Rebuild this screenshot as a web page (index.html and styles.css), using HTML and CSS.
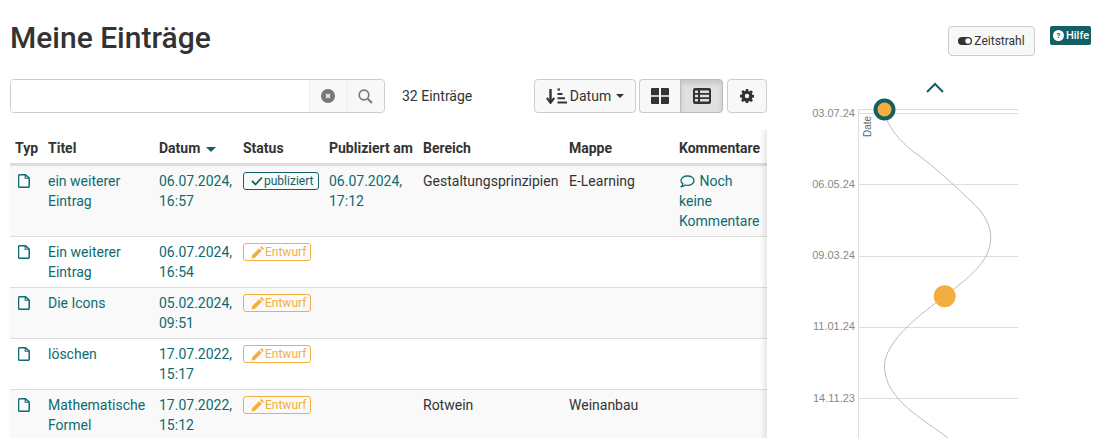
FILE: index.html
```html
<!DOCTYPE html>
<html lang="de">
<head>
    <meta charset="UTF-8">
    <meta name="viewport" content="width=device-width, initial-scale=1.0">
    <title>Meine Einträge</title>
    <link rel="stylesheet" href="styles.css">
</head>
<body>

<svg class="icon-defs" width="0" height="0">
    <symbol id="i-file" viewBox="0 0 12 14">
        <path d="M1.600 .8h5.900l3.700 3.400v7.900a1.100 1.100 0 0 1-1.100 1.100H1.600a1.100 1.100 0 0 1-1.100-1.100V1.900a1.100 1.100 0 0 1 1.100-1.100z" fill="none" stroke="currentColor" stroke-width="1.500"/>
        <path d="M7.200 1v3.300h3.600" fill="none" stroke="currentColor" stroke-width="1.100"/>
    </symbol>
    <symbol id="i-pencil" viewBox="0 0 14 14">
        <path d="M.6 13.4l.8-3.700 7.400-7.400 2.900 2.900-7.400 7.400zM9.700 1.400l.8-.8a1 1 0 0 1 1.400 0l1.500 1.500a1 1 0 0 1 0 1.400l-.8.8z" fill="currentColor"/>
    </symbol>
</svg>

<div class="page">
    <main class="main">
        <h1 class="title">Meine Einträge</h1>

        <div class="toolbar">
            <div class="search">
                <input class="search-input" type="text" aria-label="Suche">
                <button class="search-btn" type="button" aria-label="Leeren">
                    <svg width="14" height="14" viewBox="0 0 14 14"><circle cx="7" cy="7" r="7" fill="#777"/><path d="M5 5l4 4M9 5l-4 4" stroke="#fff" stroke-width="1.400"/></svg>
                </button>
                <button class="search-btn" type="button" aria-label="Suchen">
                    <svg width="15" height="15" viewBox="0 0 15 15"><circle cx="6" cy="6" r="4.800" fill="none" stroke="#777" stroke-width="1.700"/><path d="M9.600 9.600l4.400 4.400" stroke="#777" stroke-width="2"/></svg>
                </button>
            </div>
            <span class="count">32 Einträge</span>
            <button class="btn btn-sort" type="button">
                <svg width="21" height="16" viewBox="0 0 21 16"><path d="M4.500 1v13" fill="none" stroke="#333" stroke-width="2.400"/><path d="M.8 9.800l3.700 5 3.700-5" fill="none" stroke="#333" stroke-width="2.200"/><path d="M11.500 1.500h2.500M11.500 6h5M11.500 10.300h7.500M11.500 14.500h9.500" stroke="#333" stroke-width="2"/></svg>
                Datum
                <span class="caret"></span>
            </button>
            <div class="btn-group">
                <button class="btn btn-view" type="button" aria-label="Kacheln">
                    <svg width="18" height="16" viewBox="0 0 18 16"><path d="M1 0h7v7.300H0V1a1 1 0 0 1 1-1zM10 0h7a1 1 0 0 1 1 1v6.300h-8zM0 8.700h8V16H1a1 1 0 0 1-1-1zM10 8.700h8V15a1 1 0 0 1-1 1h-7z" fill="#333"/></svg>
                </button>
                <button class="btn btn-view active" type="button" aria-label="Tabelle">
                    <svg width="18" height="16" viewBox="0 0 18 16"><path fill-rule="evenodd" fill="#333" d="M2 0h14a2 2 0 0 1 2 2v12a2 2 0 0 1-2 2H2a2 2 0 0 1-2-2V2a2 2 0 0 1 2-2zM2 2.500v2.500h3V2.500zM7 2.500v2.500h9V2.500zM2 6.800v2.400h3V6.800zM7 6.800v2.400h9V6.800zM2 11v2.500h3V11zM7 11v2.500h9V11z"/></svg>
                </button>
            </div>
            <button class="btn btn-gear" type="button" aria-label="Einstellungen">
                <svg width="14" height="14" viewBox="0 0 14 14"><path fill-rule="evenodd" fill="#333" d="M5.800 0h2.400l.3 1.900 1.100.5 1.600-1.100 1.700 1.700-1.100 1.600.5 1.100 1.900.3v2.400l-1.900.3-.5 1.100 1.100 1.600-1.700 1.700-1.600-1.100-1.100.5-.3 1.900H5.800l-.3-1.900-1.100-.5-1.600 1.100-1.700-1.700 1.100-1.600-.5-1.100L0 8.200V5.800l1.900-.3.500-1.100-1.100-1.600 1.700-1.700 1.600 1.100 1.100-.5zM7 4.800a2.200 2.200 0 1 0 0 4.400 2.200 2.200 0 0 0 0-4.400z"/></svg>
            </button>
        </div>

        <div class="table-wrap">
            <table class="entries">
                <colgroup>
                    <col class="c-typ"><col class="c-titel"><col class="c-datum"><col class="c-status">
                    <col class="c-pub"><col class="c-bereich"><col class="c-mappe"><col class="c-komm">
                </colgroup>
                <thead>
                    <tr>
                        <th>Typ</th>
                        <th>Titel</th>
                        <th>Datum <span class="sort-caret"></span></th>
                        <th>Status</th>
                        <th>Publiziert am</th>
                        <th>Bereich</th>
                        <th>Mappe</th>
                        <th>Kommentare</th>
                    </tr>
                </thead>
                <tbody>
                    <tr>
                        <td><svg class="file"><use href="#i-file"/></svg></td>
                        <td><a href="#">ein weiterer Eintrag</a></td>
                        <td class="link">06.07.2024, 16:57</td>
                        <td><span class="badge badge-pub"><svg width="12" height="10" viewBox="0 0 12 10"><path d="M1 5l3.500 3.500L11 1.500" fill="none" stroke="currentColor" stroke-width="1.800"/></svg>publiziert</span></td>
                        <td class="link">06.07.2024, 17:12</td>
                        <td>Gestaltungsprinzipien</td>
                        <td>E-Learning</td>
                        <td><a href="#"><svg class="bubble" width="15" height="13" viewBox="0 0 15 13"><path d="M7.500 1C3.900 1 1 3 1 5.600c0 1.300.7 2.400 1.800 3.200-.2 1.100-.9 2.200-1.400 2.700 1.500-.1 2.900-.8 3.800-1.500.7.200 1.400.3 2.300.3 3.600 0 6.500-2.100 6.500-4.700S11.100 1 7.500 1z" fill="none" stroke="currentColor" stroke-width="1.300"/></svg> Noch keine Kommentare</a></td>
                    </tr>
                    <tr>
                        <td><svg class="file"><use href="#i-file"/></svg></td>
                        <td><a href="#">Ein weiterer Eintrag</a></td>
                        <td class="link">06.07.2024, 16:54</td>
                        <td><span class="badge badge-draft"><svg width="13" height="13"><use href="#i-pencil"/></svg>Entwurf</span></td>
                        <td></td><td></td><td></td><td></td>
                    </tr>
                    <tr>
                        <td><svg class="file"><use href="#i-file"/></svg></td>
                        <td><a href="#">Die Icons</a></td>
                        <td class="link">05.02.2024, 09:51</td>
                        <td><span class="badge badge-draft"><svg width="13" height="13"><use href="#i-pencil"/></svg>Entwurf</span></td>
                        <td></td><td></td><td></td><td></td>
                    </tr>
                    <tr>
                        <td><svg class="file"><use href="#i-file"/></svg></td>
                        <td><a href="#">löschen</a></td>
                        <td class="link">17.07.2022, 15:17</td>
                        <td><span class="badge badge-draft"><svg width="13" height="13"><use href="#i-pencil"/></svg>Entwurf</span></td>
                        <td></td><td></td><td></td><td></td>
                    </tr>
                    <tr>
                        <td><svg class="file"><use href="#i-file"/></svg></td>
                        <td><a href="#">Mathematische Formel</a></td>
                        <td class="link">17.07.2022, 15:12</td>
                        <td><span class="badge badge-draft"><svg width="13" height="13"><use href="#i-pencil"/></svg>Entwurf</span></td>
                        <td></td>
                        <td>Rotwein</td>
                        <td>Weinanbau</td>
                        <td></td>
                    </tr>
                </tbody>
            </table>
        </div>
    </main>

    <aside class="side">
        <div class="side-top">
            <button class="btn btn-timeline" type="button">
                <svg width="14" height="8" viewBox="0 0 14 8"><rect width="14" height="8" rx="4" fill="#333"/><circle cx="10" cy="4" r="2.700" fill="#fff"/></svg>
                Zeitstrahl
            </button>
            <a class="help" href="#"><span class="help-dot">?</span>Hilfe</a>
        </div>
        <!-- chart coords = screenshot coords, viewBox shifts them into the aside -->
        <svg class="timeline" width="335" height="368" viewBox="767 70 335 368">
            <path d="M927 92l8-8 8 8" fill="none" stroke="#135f64" stroke-width="2"/>
            <g class="grid">
                <path d="M858.500 109v329"/>
                <path d="M858 109.500h160M858 113.500h160M858 184.500h160M858 256.500h160M858 327.500h160M858 398.500h160"/>
            </g>
            <g class="ticks">
                <text x="855" y="117">03.07.24</text>
                <text x="855" y="188">06.05.24</text>
                <text x="855" y="259">09.03.24</text>
                <text x="855" y="330">11.01.24</text>
                <text x="855" y="402">14.11.23</text>
            </g>
            <text class="axis-name" transform="translate(871 137) rotate(-90)">Date</text>
            <path class="curve" d="M886 118C892 133 905 146 918 155S960 190 979 209C986 218 991 228 990.700 238C990.500 262 968 278 945 296C925 311 884.500 340 884.500 366C884.500 400 925 420 948 438"/>
            <circle cx="884.500" cy="109.500" r="9" fill="#f3ae3f" stroke="#135f64" stroke-width="4"/>
            <circle cx="944.700" cy="296.300" r="11" fill="#f3ae3f"/>
        </svg>
    </aside>
</div>

</body>
</html>
```

FILE: styles.css
```css
* {
    box-sizing: border-box;
}
html, body {
    height: 100%;
}
body {
    margin: 0;
    overflow: hidden;
    background: #fff;
    color: #333;
    font-family: Roboto, "Liberation Sans", sans-serif;
    font-size: 14px;
    line-height: 20px;
}
a {
    color: #0d6b72;
    text-decoration: none;
}
.icon-defs {
    display: block;
}

.page {
    display: flex;
    height: 438px;
    overflow: hidden;
}
.main {
    width: 767px;
    flex: none;
    padding-left: 10px;
}
.title {
    margin: 0;
    padding-top: 20px;
    height: 79px;
    font-size: 30px;
    line-height: 36px;
    font-weight: 500;
}

.toolbar {
    display: flex;
    align-items: center;
    height: 34px;
}
.search {
    display: flex;
    width: 375px;
    height: 34px;
    border: 1px solid #ccc;
    border-radius: 4px;
    overflow: hidden;
}
.search-input {
    flex: 1;
    min-width: 0;
    border: none;
    outline: none;
    background: #fff;
}
.search-btn {
    width: 38px;
    flex: none;
    display: flex;
    align-items: center;
    justify-content: center;
    padding: 0 2px 0 0;
    border: none;
    border-left: 1px solid #eee;
    background: #f8f8f8;
}
.search-btn:last-child {
    width: 37px;
}
.count {
    margin-left: 17px;
    width: 132px;
}
.btn {
    display: inline-flex;
    align-items: center;
    justify-content: center;
    height: 34px;
    padding: 0;
    border: 1px solid #ccc;
    border-radius: 4px;
    background: #f8f8f8;
    color: #333;
    font-family: inherit;
    font-size: 14px;
}
.btn-sort {
    width: 102px;
    gap: 3px;
}
.caret {
    margin-left: 2px;
    border-top: 4px solid #333;
    border-left: 4px solid transparent;
    border-right: 4px solid transparent;
}
.btn-group {
    display: flex;
    margin-left: 3px;
}
.btn-view:first-child {
    width: 41px;
    border-radius: 4px 0 0 4px;
    border-right: none;
}
.btn-view:last-child {
    width: 43px;
    border-radius: 0 4px 4px 0;
}
.btn-view.active {
    background: #e0e0e0;
    border-color: #bbb;
    box-shadow: inset 0 3px 5px rgba(0,0,0,0.125);
}
.btn-gear {
    width: 40px;
    margin-left: 4px;
}

.table-wrap {
    position: relative;
    margin-top: 17px;
    width: 757px;
}
.table-wrap::after {
    content: "";
    position: absolute;
    top: 0;
    right: 0;
    bottom: 0;
    width: 7px;
    background: linear-gradient(to right, rgba(0,0,0,0), rgba(0,0,0,0.09));
}
.entries {
    width: 757px;
    table-layout: fixed;
    border-collapse: collapse;
}
.c-typ { width: 33px; }
.c-titel { width: 111px; }
.c-datum { width: 84px; }
.c-status { width: 86px; }
.c-pub { width: 94px; }
.c-bereich { width: 146px; }
.c-mappe { width: 110px; }
.c-komm { width: 93px; }

.entries th {
    padding: 8px 5px 5px;
    height: 33px;
    text-align: left;
    font-weight: 700;
    white-space: nowrap;
    border-bottom: 3px solid #ddd;
}
.entries td {
    padding: 5px;
    vertical-align: top;
    border-bottom: 1px solid #ddd;
    height: 51px;
}
.entries tbody tr:nth-child(odd) {
    background: #f9f9f9;
}
.link {
    color: #0d6b72;
}
.file {
    display: block;
    width: 12px;
    height: 14px;
    margin: 3px 0 0 3px;
    color: #0d6b72;
}
.sort-caret {
    display: inline-block;
    vertical-align: middle;
    margin-left: 2px;
    border-top: 5px solid #135f64;
    border-left: 5px solid transparent;
    border-right: 5px solid transparent;
}
.bubble {
    margin: 0 1px -2px 1px;
}
.badge {
    display: inline-flex;
    align-items: center;
    gap: 1px;
    height: 18px;
    margin-top: 1px;
    padding: 0 2px 0 7px;
    border: 1px solid;
    border-radius: 3px;
    font-size: 12px;
    line-height: 16px;
    white-space: nowrap;
    vertical-align: top;
}
.badge-pub {
    width: 76px;
    color: #135f64;
    border-color: #135f64;
}
.badge-draft {
    width: 68px;
    color: #f3ae3f;
    border-color: #f3ae3f;
}

.side {
    flex: 1;
    min-width: 0;
}
.side-top {
    display: flex;
    align-items: flex-start;
    height: 70px;
    padding: 26px 11px 0 181px;
}
.btn-timeline {
    flex: none;
    width: 87px;
    height: 30px;
    gap: 2px;
    font-size: 12px;
}
.help {
    display: inline-flex;
    align-items: center;
    gap: 2px;
    flex: none;
    width: 41px;
    height: 19px;
    margin-left: 15px;
    padding: 0 0 0 3px;
    border-radius: 2px;
    background: #135f64;
    color: #fff;
    font-size: 11px;
    font-weight: 500;
}
.help-dot {
    width: 11px;
    height: 11px;
    border-radius: 50%;
    background: #fff;
    color: #135f64;
    font-size: 8px;
    line-height: 11px;
    text-align: center;
    font-weight: 700;
}
.timeline {
    display: block;
}
.grid path {
    fill: none;
    stroke: #ddd;
    stroke-width: 1;
}
.ticks text {
    fill: #888;
    font-family: "Liberation Sans", sans-serif;
    font-size: 11px;
    text-anchor: end;
}
.axis-name {
    fill: #666;
    font-family: "Liberation Sans", sans-serif;
    font-size: 10px;
}
.curve {
    fill: none;
    stroke: #bbb;
    stroke-width: 1;
}
```
